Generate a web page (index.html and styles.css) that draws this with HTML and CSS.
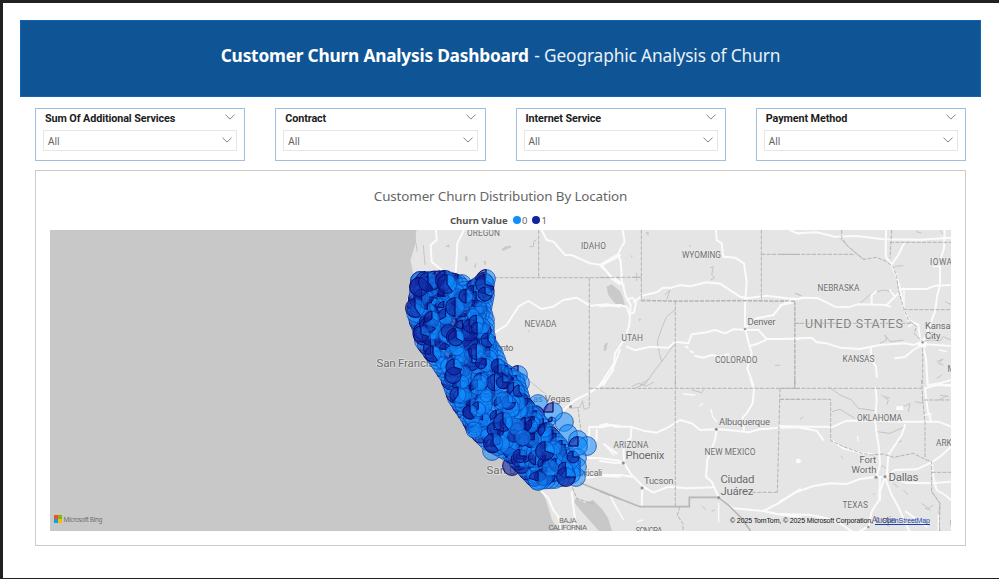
FILE: index.html
```html
<!DOCTYPE html>
<html lang="en">
<head>
<meta charset="utf-8">
<title>Customer Churn Analysis Dashboard</title>
<link rel="stylesheet" href="styles.css">
</head>
<body>
<main class="page">
  <header class="banner"><h1><span class="banner-main">Customer Churn Analysis Dashboard</span> <span class="banner-sub">- Geographic Analysis of Churn</span></h1></header>

  <section class="slicers">
    <div class="slicer">
      <div class="slicer-head"><span>Sum Of Additional Services</span><svg class="chev" viewBox="0 0 10 6"><path d="M.5.7 5 5.1 9.500.7"/></svg></div>
      <div class="select"><span>All</span><svg class="chev" viewBox="0 0 10 6"><path d="M.5.7 5 5.1 9.500.7"/></svg></div>
    </div>
    <div class="slicer">
      <div class="slicer-head"><span>Contract</span><svg class="chev" viewBox="0 0 10 6"><path d="M.5.7 5 5.1 9.500.7"/></svg></div>
      <div class="select"><span>All</span><svg class="chev" viewBox="0 0 10 6"><path d="M.5.7 5 5.1 9.500.7"/></svg></div>
    </div>
    <div class="slicer">
      <div class="slicer-head"><span>Internet Service</span><svg class="chev" viewBox="0 0 10 6"><path d="M.5.7 5 5.1 9.500.7"/></svg></div>
      <div class="select"><span>All</span><svg class="chev" viewBox="0 0 10 6"><path d="M.5.7 5 5.1 9.500.7"/></svg></div>
    </div>
    <div class="slicer">
      <div class="slicer-head"><span>Payment Method</span><svg class="chev" viewBox="0 0 10 6"><path d="M.5.7 5 5.1 9.500.7"/></svg></div>
      <div class="select"><span>All</span><svg class="chev" viewBox="0 0 10 6"><path d="M.5.7 5 5.1 9.500.7"/></svg></div>
    </div>
  </section>

  <section class="card">
    <h2>Customer Churn Distribution By Location</h2>
    <div class="legend"><b>Churn Value</b><i class="dot dot-0"></i><span>0</span><i class="dot dot-1"></i><span>1</span></div>
    <svg class="map" viewBox="50 230 901 301" width="901" height="301">
      <rect class="water" x="50" y="230" width="901" height="301"/>
      <path class="land" d="M416.500 230 415 245 410.500 260 413.500 275 407 300 410 325 425 350 440 380 465 430 500 455 532 482 541 490 546 500 552 520 559 531H599L591 522 582 512 574 502 576 498 585 503 593 500 602 509 608 518 612 531H951V230Z"/>

      <!-- northern California, Nevada, Idaho -->
      <g transform="translate(360 225) scale(.33333)">
        <path class="lake" d="M740 185 755 178 770 190 780 200V245L765 235 745 210ZM255 65l12-8 2 10zM315 95l6-3 2 14-7 4zM345 115l4 0-2 14-5-2zM370 110l6-4 3 10-5 5zM425 72l12-8 14-2 4 4-26 12zM735 355l8-2-4 22-6 4zM502 320l8-6-3 8z"/>
        <path class="river" d="M508 65 520 65 522 48 530 44M165 40 172 80M190 60 195 120"/>
        <path class="road" d="M228 15 230 45 212 60 215 110 245 135M312 15 292 55 290 100 287 140M545 15 560 45 580 50 615 90 635 90 690 115 725 120 765 100 780 90M725 120 755 160 780 178M400 325 440 300 475 245 505 228 545 252 580 245 610 225 650 218 690 242 740 238 780 245M780 375 755 440 730 480"/>
        <path class="state" d="M536 15V158M402 158H780M688 158V480"/>
      </g>

      <!-- southern California, Baja -->
      <g transform="translate(400 370) scale(.33333)">
        <path class="river" d="M385 30 440 75M510 115 540 112 548 92 552 118 570 112M530 190 548 235"/>
        <path class="road" d="M640 0 610 40 570 68 525 90 490 120M567 230 568 170 605 172 635 165 660 168M590 180 590 210M612 222 650 250M550 263 600 265 660 272M550 325 600 317 660 320M425 365 445 385 460 420 475 440 483 483M515 365 525 450 520 483"/>
        <path class="road minor" d="M632 378 645 405 660 430"/>
        <path class="state" d="M568 0V112M568 55H660M534 115 543 185M517 352 530 385 580 402"/>
        <path class="border" d="M540 338 660 387"/>
        <circle class="city" cx="512" cy="110" r="5"/>
      </g>

      <!-- Utah, Wyoming, Colorado -->
      <g transform="translate(600 225) scale(.33333)">
        <path class="lake" d="M20 185 35 180 45 192 58 195 68 215 75 240 60 242 40 228 25 205ZM12 360l10-6-2 18-9 5zM138 20l8 0 0 12-6-4zM65 62l6 4-4 6zM92 90l6 4-3 6zM116 280l8 2-6 8zM266 62l5-2 0 8z"/>
        <path class="river" d="M100 156H118M110 143V168M330 128 340 125 335 150 345 158 332 165M195 210 210 195 200 225M225 255 200 275 185 310 172 350 178 385 185 410 165 435 135 478M185 410 225 355M120 480 150 460M525 421H540M585 295 600 295M588 205 600 212"/>
        <path class="road" d="M68 15 74 50 55 85 62 110 66 170 78 215 92 240 88 300 75 340 45 385 42 415 0 480M0 120 50 90 62 105M0 120 30 150 72 180M0 244 60 240 80 245M82 225 98 218 108 232 102 262 88 268 82 250M102 232 125 212 170 202 190 188 215 188 240 180 270 184 320 172 360 176 420 215 440 220 500 212 560 220 600 222M348 15 350 45 365 55 370 95 405 98 432 115 440 170 435 240 435 310 445 350 455 385 442 430 460 480M80 365 105 376 150 365 205 368 225 350 265 355 275 328 320 322 345 315 375 325 400 313 440 315 475 315 500 342 600 342M585 230 545 240 520 270 470 280 440 305M497 345 470 357 452 362M258 365l5 3M272 378l6 4M285 392 310 398 335 390 360 395 385 388"/>
        <path class="state" d="M124 15V227M0 157H124M124 228H585M124 225 240 229 420 226 585 230M226 228V480M484 15V227M484 88H600M585 230V480"/>
        <circle class="city" cx="435" cy="312" r="4"/>
        <path class="road minor" d="M570 15 600 28"/>
      </g>

      <!-- Nebraska, Kansas, Iowa -->
      <g transform="translate(780 225) scale(.33333)">
        <path class="river" d="M178 38 205 65 240 95 252 105M240 235 275 205 310 195 340 200M45 205 65 212M300 355 320 345 315 330 330 350 370 345M428 350 450 345 480 348 490 335 513 345M470 410 490 402 475 415 490 420M470 460 485 450M495 230 513 238M345 124 370 122M480 18 490 28M408 20 425 24"/>
        <path class="road" d="M30 15 50 25 110 22 165 35 230 33 310 43 420 44 513 38M318 15 317 95 335 120 350 155 360 190 370 245 385 285 415 300 420 340 428 352M372 55 355 90 335 118M355 192 440 192 465 182 513 180M355 205 320 240 232 238 205 247 165 245 115 220 70 218 35 225 0 242M315 240 330 245M275 236V210L288 200M330 195 345 215M494 15 492 70 480 110 480 180 472 210 465 260 440 325 428 352M0 342 95 338 110 352 140 355 180 368 240 372 300 360 375 355 400 360 428 352M272 370 275 405 288 425 290 455M345 400 375 396 400 375 428 358 438 400 443 480M428 358 470 360 513 363M445 480 480 475 513 465"/>
        <path class="road minor" d="M460 125H480M478 375 500 380M372 188V245M400 295 385 305"/>
        <path class="state" d="M185 15V38L205 65 252 103 290 97 320 110 340 125 350 155 355 195 370 245 385 285 410 305 402 325 428 350M0 88H225M330 52H513M335 15 330 100M370 254H513M44 228V480M44 295H400M428 352V480M0 228H44"/>
        <path class="hub" d="M412 350h28v16h-25z"/>
        <circle class="city" cx="428" cy="352" r="4"/>
      </g>

      <!-- Arizona, New Mexico, northern Mexico -->
      <g transform="translate(600 380) scale(.33333)">
        <path class="river" d="M95 20 115 10 140 18 162 6M105 24 135 12M275 30 305 38 312 28M182 330l6-4M305 378l12 10M335 395l10-6"/>
        <path class="road" d="M15 0 0 15M0 137 20 132 45 140 90 140 130 152 170 158 205 142 240 120 275 130 300 150 350 148 385 150 445 157 480 148 535 143 600 142M95 140 92 175 70 190 72 245 80 262 95 285 130 320 160 338 205 320 260 325 340 322M0 243 40 248 72 248M0 285 60 285 95 290M127 322 125 378M350 148 345 180 322 240 318 290 335 305 355 350M452 0 462 30 458 70 440 100 428 112 432 152M355 350 400 385 490 393 535 370 600 328M490 393 530 402 600 410"/>
        <path class="road minor" d="M12 193 42 225M32 350 50 385 70 418M250 42 285 45M333 88 338 110 350 125M300 78 308 70M112 425 128 420M356 370V425"/>
        <path class="state" d="M0 25H600M226 0V378M540 25 532 337M540 58H600M532 337H420M240 380 232 405 248 430 250 453M584 0V25"/>
        <path class="border" d="M0 334 120 380H268V352H355L385 375 425 415 452 453"/>
        <circle class="hub" cx="595" cy="243" r="7"/>
        <circle class="city" cx="70" cy="249" r="5"/><circle class="city" cx="126" cy="324" r="5"/><circle class="city" cx="349" cy="148" r="5"/><circle class="city" cx="356" cy="353" r="5"/>
      </g>

      <!-- Oklahoma, Texas -->
      <g transform="translate(780 380) scale(.33333)">
        <path class="river" d="M145 20 180 45 215 60 235 85 285 92M155 95 180 88 200 100 225 115M305 45 325 60 320 75M315 50l15 5M350 90 390 70 385 95M290 155 330 160 375 140M345 190l20-8M425 370 445 385 460 375M435 385l18 5M455 335 480 370 475 420 480 453M370 330 385 345M340 310l15 12M395 420l18 10M300 255 320 265M60 118l10-8M405 65 430 70M480 45 505 50M475 60l28-14M190 235l-8-6M310 430l20 10M280 345l4-5"/>
        <path class="road" d="M287 25 290 60 285 120 290 160 297 205 300 255 290 290M0 138 80 140 160 140 200 122 280 122 360 125 435 125 475 125 513 140M375 135 365 165 325 225 320 290M435 25 443 90 452 120M435 25 470 15 513 15M0 365 45 338 100 318 150 310 200 312 240 297 290 290 315 290 380 308 455 310 513 305M315 290 345 270 410 268 455 247 480 230 513 200M300 295 297 360 275 395 265 440M315 290 300 335 300 360M318 300 335 345 355 380 365 405 388 453M455 247 460 290 470 330 495 345 513 360M470 15 513 18M60 143 110 152 130 180M160 185 190 205 245 220 275 222M0 402 90 405 140 415 180 430 215 453M265 440 240 453M378 395 440 440"/>
        <path class="road minor" d="M232 170 235 182M435 105 455 102M475 405V453"/>
        <path class="hub" d="M350 78h20v12h-22z"/><circle class="hub" cx="55" cy="243" r="7"/>
        <path class="state" d="M0 25H425M425 0 428 60H513M428 60 435 125V235M0 58H152V182L190 200 245 220 275 225 310 222 340 232 400 220 435 238 455 245V335L480 370 478 453M455 277H513M44 0V25"/>
        <path class="border" d="M513 420V436"/>
        <circle class="city" cx="288" cy="292" r="5"/><circle class="city" cx="315" cy="290" r="5"/><circle class="city" cx="265" cy="441" r="4"/>
      </g>

      <g class="place">
        <text x="467" y="236.300" textLength="33">OREGON</text>
        <text x="581" y="248.500" textLength="25">IDAHO</text>
        <text x="682" y="257.500" textLength="39">WYOMING</text>
        <text x="817.500" y="290.700" textLength="42">NEBRASKA</text>
        <text x="930" y="264.800" textLength="22">IOWA</text>
        <text x="524.500" y="327" textLength="32">NEVADA</text>
        <text x="621.500" y="340.500" textLength="21.500">UTAH</text>
        <text x="715" y="363" textLength="42.500">COLORADO</text>
        <text x="842.500" y="361.500" textLength="32">KANSAS</text>
        <text x="947.500" y="372">M</text>
        <text x="613.500" y="447.500" textLength="35">ARIZONA</text>
        <text x="704.500" y="455" textLength="51">NEW MEXICO</text>
        <text x="857" y="420.500" textLength="45">OKLAHOMA</text>
        <text x="936" y="446">ARK</text>
        <text x="842.500" y="508" textLength="25.500">TEXAS</text>
        <text class="tight" x="559" y="523" textLength="17.500">BAJA</text>
        <text class="tight" x="548.500" y="530" textLength="38.500">CALIFORNIA</text>
        <text x="635.500" y="534" textLength="27">SONORA</text>
      </g>
      <g class="town">
        <text class="t11" x="376.500" y="367" textLength="70">San Francisco</text>
        <text x="467" y="350.500" textLength="46.500">Sacramento</text>
        <text x="528" y="402" textLength="42.500">Las Vegas</text>
        <text class="t11" x="486.500" y="474" textLength="52">San Diego</text>
        <text x="571" y="476" textLength="31">Mexicali</text>
        <text x="747.500" y="325" textLength="28">Denver</text>
        <text x="925" y="328.500" textLength="30.500">Kansas</text>
        <text x="925" y="338.500" textLength="15.500">City</text>
        <text class="t11" x="625.500" y="459" textLength="39">Phoenix</text>
        <text x="644" y="483.500" textLength="29.500">Tucson</text>
        <text x="719" y="425" textLength="51">Albuquerque</text>
        <text class="t11" x="720.500" y="482.500" textLength="34">Ciudad</text>
        <text class="t11" x="720.500" y="494.500" textLength="33">Juárez</text>
        <text x="859.500" y="463" textLength="16.500">Fort</text>
        <text x="851.500" y="472.800" textLength="25">Worth</text>
        <text class="t11" x="888.500" y="481" textLength="30">Dallas</text>
        <text x="871.500" y="522.500" textLength="24.500">Austin</text>
      </g>
      <text class="country" x="805" y="328" textLength="98">UNITED STATES</text>

      <g id="bubbles"></g>

      <g class="bing">
        <path fill="#f25022" d="M54 515h4v4h-4z"/><path fill="#7fba00" d="M58 515h4v4h-4z"/>
        <path fill="#00a4ef" d="M54 519h4v4h-4z"/><path fill="#ffb900" d="M58 519h4v4h-4z"/>
        <text x="63.500" y="521.500" textLength="39">Microsoft Bing</text>
      </g>
      <g class="credit">
        <text x="730" y="523" textLength="143">© 2025 TomTom, © 2025 Microsoft Corporation,</text>
        <text class="link" x="875" y="523" textLength="55">© OpenStreetMap</text>
        <path class="rule" d="M875 524.500h55"/>
      </g>
    </svg>
  </section>
</main>
<script src="bubbles.js"></script>
</body>
</html>
```
FILE: styles.css
```css
* { box-sizing: border-box; }
body { margin: 0; background: #fff; font-family: "Noto Sans", "Open Sans", sans-serif; }
.page { width: 999px; height: 579px; border: solid #212121; border-width: 3px 0 1px 3px; padding: 17px 18px 0 17px; overflow: hidden; }
.banner { height: 77px; background: #0f5595; border: 1px solid #0f62b4; display: flex; justify-content: center; align-items: center; padding-bottom: 5px; }
.banner h1 { margin: 0; font-size: 17.3px; line-height: 24px; font-weight: 400; color: #fff; white-space: nowrap; display: flex; gap: 5.500px; }
.banner-main { font-weight: 700; letter-spacing: -.2px; }
.banner-sub { color: #e8f0f8; letter-spacing: -.12px; }
.slicers { margin: 11px 15px 0; display: grid; grid-template-columns: repeat(4, 1fr); gap: 30px; }
.slicer { height: 52.500px; border: 1px solid #a3bfdf; padding: 0 7px 0 7px; }
.slicer-head { height: 21px; padding: 0 2px 0 2px; display: flex; justify-content: space-between; align-items: center; font: 700 10.8px/20px Roboto, sans-serif; letter-spacing: -.1px; color: #1c1c1c; }
.slicer-head span { margin-bottom: 1px; }
.chev { width: 10px; height: 6px; fill: none; stroke: #757575; stroke-width: .9; }
.slicer-head .chev { margin-bottom: 6px; }
.select { height: 21px; border: 1px solid #e6e6e6; padding: 1px 4px 0 4px; display: flex; justify-content: space-between; align-items: center; font-size: 10px; line-height: 18px; color: #666; }
.select .chev { margin-bottom: 2px; }
.card { margin: 9.500px 15px 0; height: 376px; border: 1px solid #ccc; padding: 15px 14px 0; }
.card h2 { margin: 0; font-weight: 400; font-size: 13.4px; line-height: 21px; letter-spacing: -.13px; text-align: center; color: #666; }
.legend { height: 23px; margin-left: 400px; display: flex; align-items: center; font-size: 9.5px; color: #666; padding-top: 3px; }
.legend b { color: #555; font-weight: 700; margin-right: 6px; width: 57px; white-space: nowrap; }
.dot { width: 8px; height: 8px; border-radius: 50%; margin-right: 1px; }
.dot-0 { background: #118dff; }
.dot-1 { background: #12239e; margin-left: 5px; }
.map { display: block; font-family: Roboto, sans-serif; }
.water { fill: #c8c8c8; }
.land { fill: #e5e5e5; }
.lake { fill: #cacaca; }
.river { fill: none; stroke: #c4c4c4; stroke-width: 3; }
.road { fill: none; stroke: #fbfbfb; stroke-width: 6; stroke-linejoin: round; stroke-linecap: round; }
.minor { stroke-width: 4; }
.hub { fill: #fbfbfb; }
.state { fill: none; stroke: #b4b4b2; stroke-width: 3; stroke-dasharray: 12 4; }
.border { fill: none; stroke: #b8b6b6; stroke-width: 5; }
.city { fill: #8c8c8c; stroke: #eee; stroke-width: 1; }
.place text, .town text, .country { paint-order: stroke; stroke: #ececec; stroke-width: 1.5px; stroke-opacity: .7; }
.place { fill: #6e6e6e; font-size: 8.300px; }
.place .tight { font-size: 7.800px; stroke: none; }
.town { fill: #6a6a6a; font-size: 9.500px; }
.town .t11 { font-size: 11.500px; }
.country { fill: #858585; font-size: 12.500px; }
.blue { fill: #118dff; fill-opacity: .55; stroke: #0a3ca6; stroke-width: .9; stroke-opacity: .75; }
.navy { fill: #12239e; fill-opacity: .6; stroke: #050f6e; stroke-width: 1; }
.bing { fill: #707070; font: 6.500px "Noto Sans", sans-serif; }
.credit { fill: #111; font: 7px "Liberation Sans", sans-serif; }
.link { fill: #1a3fa8; }
.rule { stroke: #1a3fa8; stroke-width: 1; }
```
FILE: bubbles.js
```javascript
// Pie bubbles: blue is retained customers, navy is the churned share.
const layer = document.getElementById("bubbles");
const NS = "http://www.w3.org/2000/svg";
let seed = 20257;
const rnd = () => {
  seed = (seed + 0x6D2B79F5) | 0;
  let t = Math.imul(seed ^ (seed >>> 15), 1 | seed);
  t = (t + Math.imul(t ^ (t >>> 7), 61 | t)) ^ t;
  return ((t ^ (t >>> 14)) >>> 0) / 4294967296;
};

function shape(d, cls) {
  const p = document.createElementNS(NS, "path");
  p.setAttribute("d", d);
  p.setAttribute("class", cls);
  layer.appendChild(p);
}

function sector(x, y, r, a, b) {
  if (b - a > 0.999) {
    return `M${x - r} ${y}a${r} ${r} 0 1 1 ${2 * r} 0a${r} ${r} 0 1 1 ${-2 * r} 0z`;
  }
  const pt = t => {
    const w = t * 2 * Math.PI;
    return `${(x + r * Math.sin(w)).toFixed(2)} ${(y - r * Math.cos(w)).toFixed(2)}`;
  };
  return `M${x} ${y}L${pt(a)}A${r} ${r} 0 ${b - a > 0.5 ? 1 : 0} 1 ${pt(b)}z`;
}

// churn is the navy fraction; blue runs clockwise from the top
function bubble(x, y, churn, r = 9.4) {
  if (churn < 1) shape(sector(x, y, r, 0, 1 - churn), "blue");
  if (churn > 0) shape(sector(x, y, r, 1 - churn, 1), "navy");
}

const area = [
  [420, 281], [445, 280], [458, 284], [468, 294], [484, 282], [485, 295], [482, 310],
  [485, 320], [485, 331], [487, 343], [494, 354], [500, 370], [515, 380], [518, 390],
  [522, 403], [529, 412], [540, 424], [550, 436], [559, 446], [571, 461], [571, 474],
  [555, 479], [537, 480], [531, 474], [512, 454], [488, 441], [477, 430], [467, 413],
  [457, 398], [449, 376], [438, 360], [424, 341], [422, 330], [416, 313], [418, 298]
];

function inside(x, y) {
  let hit = false;
  for (let i = 0, j = area.length - 1; i < area.length; j = i++) {
    const [ax, ay] = area[i], [bx, by] = area[j];
    if ((ay > y) !== (by > y) && x < (bx - ax) * (y - ay) / (by - ay) + ax) hit = !hit;
  }
  return hit;
}

const share = () => {
  const v = rnd();
  if (v < 0.42) return 0;
  if (v < 0.5) return 1;
  return [0.2, 0.25, 0.33, 0.5, 0.67, 0.75, 0.4][Math.floor(rnd() * 7)];
};

// isolated locations round the rim of the cluster
[
  [492, 451, 0], [512, 466, 1], [538, 404, 0], [564, 422, 0], [568, 434, 0],
  [578, 440, 0], [587, 446, 0], [577, 458, 0], [577, 467, 0], [576, 477, 0],
  [535, 415, 1], [518, 375, 0.3], [520, 383, 0.3],
  [462, 284, 0], [472, 290, 1], [486, 279, 0.3], [420, 281, 1]
].forEach(b => bubble(...b));

// the edge of the cluster is dense, so it is walked in short steps
area.forEach(([x, y], i) => {
  const [u, v] = area[(i + 1) % area.length];
  const steps = Math.max(1, Math.round(Math.hypot(u - x, v - y) / 5));
  for (let k = 0; k < steps; k++) {
    bubble(+(x + (u - x) * k / steps).toFixed(1), +(y + (v - y) * k / steps).toFixed(1), share());
  }
});

let n = 0;
while (n < 520) {
  const x = 406 + rnd() * 180, y = 272 + rnd() * 215;
  if (!inside(x, y)) continue;
  n++;
  if (x > 535 && y < 450 && rnd() < 0.5) continue;
  bubble(+x.toFixed(1), +y.toFixed(1), share(), 5.5 + rnd() * 3.5);
}

// landmark bubbles on top of the cluster
[
  [419, 287, 1], [428, 282, 0.6], [445, 280, 0.4], [447, 284, 0.6], [485, 284, 0.7],
  [485, 294, 0.7, 7], [415, 308, 0.6], [455, 307, 0.5], [466, 296, 0.5, 7],
  [477, 328, 0.5, 6], [421, 334, 0.7, 8], [433, 354, 0.6, 8], [454, 367, 0.7, 8],
  [488, 340, 0.6, 7], [498, 366, 0.5, 7], [458, 395, 0.4, 8], [519, 391, 0.6, 6],
  [553, 412, 0.25], [552, 421, 0.3, 4], [538, 481, 0.2], [566, 477, 0.75],
  [545, 451, 0.7], [503, 422, 0.6], [500, 444, 0.3], [578, 446, 0.25], [573, 457, 0.75, 6],
  [474, 430, 0, 8], [470, 412, 0.6, 7], [493, 443, 0.6]
].forEach(b => bubble(...b));
```
